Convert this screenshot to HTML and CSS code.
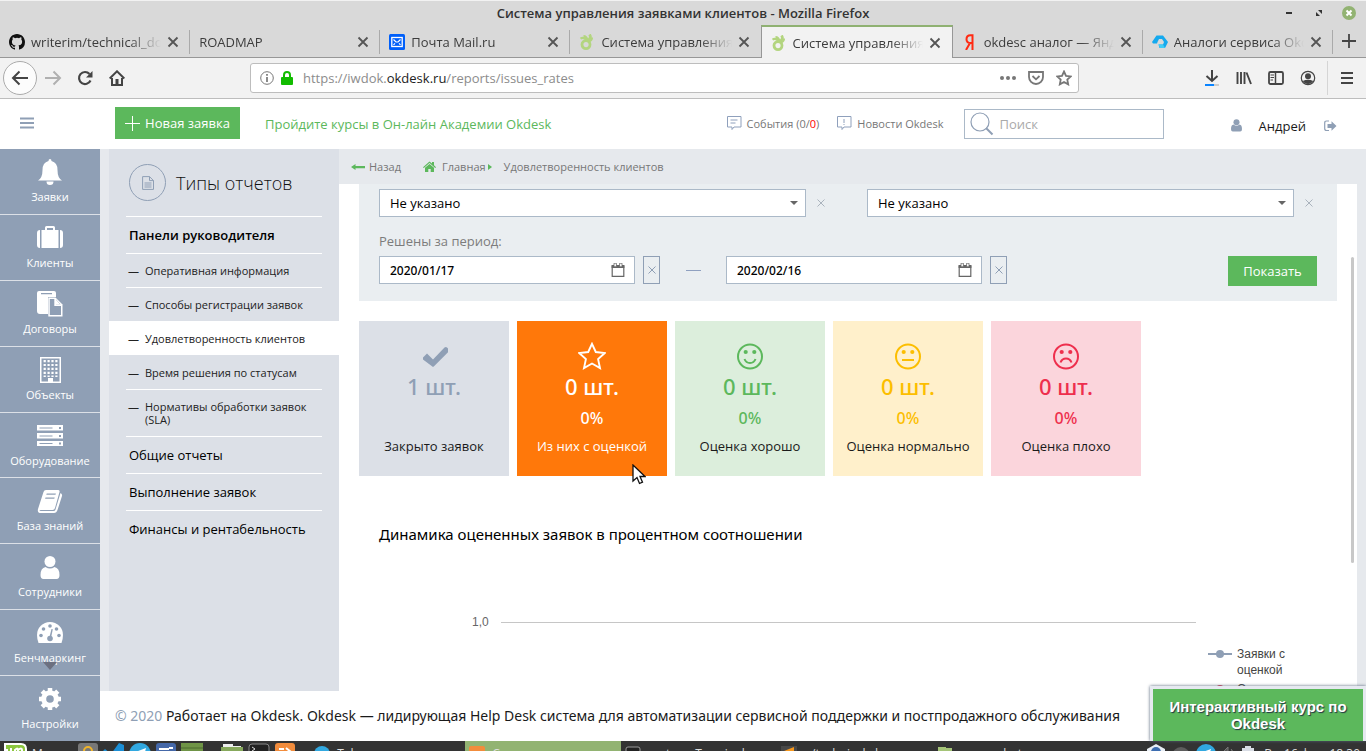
FILE: index.html
```
<!DOCTYPE html>
<html lang="ru">
<head>
<meta charset="utf-8">
<title>Система управления заявками клиентов</title>
<link rel="stylesheet" href="styles.css">
</head>
<body>
<svg class="sprite" aria-hidden="true">
  <symbol id="close" viewBox="0 0 12 12"><path d="M1.5 1.5l9 9M10.5 1.5l-9 9" fill="none" stroke="currentColor" stroke-width="1.8"/></symbol>
  <symbol id="thin-x" viewBox="0 0 8 8"><path d="M.5 .5l7 7M7.5 .5l-7 7" fill="none" stroke="currentColor" stroke-width="1"/></symbol>
  <symbol id="okdesk" viewBox="0 0 16 16"><g fill="none" stroke="#b3d57f"><circle cx="7" cy="10.6" r="4" stroke-width="2.8"/><path d="M1.500 4.600q3-2 6 1.500M4.500 2q3 0 4 4" stroke-width="2.200"/><path d="M10.500 .5q2.500 3.500-2 6" stroke-width="2.800"/><path d="M13 3.500q.3 2.500-3 4" stroke-width="2"/></g></symbol>
  <symbol id="calendar" viewBox="0 0 14 14"><path d="M1.200 3h11.600v10.300H1.200z" fill="none" stroke="currentColor" stroke-width="1.200"/><path d="M.6 2h12.800v3H.6z" fill="currentColor"/><path d="M3 .2h2.400v3.600H3zM8.600.2H11v3.600H8.600z" fill="#fff" stroke="currentColor" stroke-width=".8"/></symbol>
  <symbol id="user" viewBox="0 0 24 28"><circle cx="12" cy="7" r="6.600" fill="currentColor"/><path d="M5.500 12Q12 17.500 18.500 12Q24 13 24 22Q24 27 20 27H4Q0 27 0 22Q0 13 5.500 12z" fill="currentColor"/></symbol>
</svg>

<header class="titlebar">
  <h1 class="window-title">Система управления заявками клиентов - Mozilla Firefox</h1>
  <div class="window-buttons">
    <button class="win-btn" aria-label="Свернуть"><svg width="8" height="8"><path d="M1 4h6" stroke="#333" stroke-width="2"/></svg></button>
    <button class="win-btn" aria-label="Развернуть"><svg width="8" height="8"><path d="M3 1h4v4zM1 3v4h4z" fill="#333"/></svg></button>
    <button class="win-btn" aria-label="Закрыть"><svg width="14" height="14"><circle cx="7" cy="7" r="7" fill="#92b372"/><path d="M4.500 4.500l5 5M9.500 4.500l-5 5" stroke="#fff" stroke-width="2"/></svg></button>
  </div>
</header>

<nav class="tabs" aria-label="Вкладки">
  <div class="tab"><svg class="favicon" viewBox="0 0 16 16"><path fill="#111" d="M8 0C3.580 0 0 3.580 0 8c0 3.540 2.290 6.530 5.470 7.590.4.070.55-.17.55-.38 0-.19-.01-.82-.01-1.490-2.010.37-2.530-.49-2.690-.94-.09-.23-.48-.94-.82-1.130-.28-.15-.68-.52-.01-.53.63-.01 1.080.58 1.230.82.72 1.210 1.870.87 2.330.66.070-.52.28-.87.51-1.070-1.780-.2-3.640-.89-3.640-3.950 0-.87.31-1.590.82-2.150-.08-.2-.36-1.020.08-2.120 0 0 .67-.21 2.200.82a7.600 7.600 0 0 1 4 0c1.530-1.040 2.200-.82 2.200-.82.44 1.100.16 1.920.08 2.120.51.56.82 1.270.82 2.150 0 3.070-1.870 3.750-3.650 3.950.29.25.54.73.54 1.480 0 1.070-.01 1.930-.01 2.200 0 .21.15.46.55.38A8 8 0 0 0 16 8c0-4.420-3.580-8-8-8z"/></svg><a class="tab-label" href="#">writerim/technical_docs</a><button class="tab-close" aria-label="Закрыть вкладку"><svg><use href="#close"/></svg></button></div>
  <div class="tab"><a class="tab-label" href="#">ROADMAP</a><button class="tab-close" aria-label="Закрыть вкладку"><svg><use href="#close"/></svg></button></div>
  <div class="tab"><svg class="favicon" viewBox="0 0 16 16"><rect width="16" height="16" rx="1.500" fill="#005ff9"/><rect x="2.800" y="3.500" width="10.400" height="9" fill="none" stroke="#fff" stroke-width="1.300"/><path d="M4.500 5.500l2.500 2.500h2l2.500-2.500M4.500 10.800l1.500-1.500M11.500 10.800L10 9.300" fill="none" stroke="#fff" stroke-width="1.200"/></svg><a class="tab-label" href="#">Почта Mail.ru</a><button class="tab-close" aria-label="Закрыть вкладку"><svg><use href="#close"/></svg></button></div>
  <div class="tab before-active"><svg class="favicon"><use href="#okdesk"/></svg><a class="tab-label" href="#">Система управления заявками</a><button class="tab-close" aria-label="Закрыть вкладку"><svg><use href="#close"/></svg></button></div>
  <div class="tab active"><svg class="favicon"><use href="#okdesk"/></svg><a class="tab-label" href="#">Система управления заявками</a><button class="tab-close" aria-label="Закрыть вкладку"><svg><use href="#close"/></svg></button></div>
  <div class="tab"><svg class="favicon" viewBox="0 0 16 16"><path d="M10.500 .2V16M11 1.200H8.500Q4.500 1.200 4.500 5.200Q4.500 9 8.500 9H11M8 9L4 16" fill="none" stroke="#ff2a12" stroke-width="2"/></svg><a class="tab-label" href="#">okdesc аналог — Яндекс</a><button class="tab-close" aria-label="Закрыть вкладку"><svg><use href="#close"/></svg></button></div>
  <div class="tab"><svg class="favicon" viewBox="0 0 16 16"><path d="M4.500 1.500H11L16 8l-3 6H7.500l-1-3.500H11L12 8 10 5H7L5.500 8 5 9.500H1L0 8z" fill="#15a9ee"/><path d="M6.500 10.500H11l2 3.500H8z" fill="#42cdf6"/></svg><a class="tab-label" href="#">Аналоги сервиса Okdesk</a><button class="tab-close" aria-label="Закрыть вкладку"><svg><use href="#close"/></svg></button></div>
  <button class="new-tab" aria-label="Новая вкладка"><svg width="14" height="14"><path d="M7 0v14M0 7h14" stroke="#444" stroke-width="1.800"/></svg></button>
</nav>

<div class="toolbar">
  <button class="tool back" aria-label="Назад"><svg width="18" height="16"><path d="M17 8H2M8.500 1.500L2 8l6.500 6.500" fill="none" stroke="#444" stroke-width="2"/></svg></button>
  <button class="tool" aria-label="Вперёд"><svg width="18" height="16"><path d="M1 8h15M9.500 1.500L16 8l-6.500 6.500" fill="none" stroke="#b0b0b0" stroke-width="2"/></svg></button>
  <button class="tool" aria-label="Обновить"><svg width="16" height="16"><path d="M13.500 10.500A6 6 0 1 1 12.500 4" fill="none" stroke="#444" stroke-width="2.200"/><path d="M15.500 1v6.500H9z" fill="#444"/></svg></button>
  <button class="tool" aria-label="Домой"><svg width="16" height="16"><path d="M.7 8.500L8 1.300l7.300 7.200M3 8v7h10V8" fill="none" stroke="#444" stroke-width="2"/><path d="M6.500 9h3v6h-3z" fill="#444"/></svg></button>
  <div class="urlbar">
    <svg width="14" height="14"><circle cx="7" cy="7" r="6.300" fill="none" stroke="#777"/><path d="M7 6v5M7 3v1.800" stroke="#777" stroke-width="1.700"/></svg>
    <svg width="12" height="14"><path d="M3 7V4a3 3 0 0 1 6 0v3" fill="none" stroke="#12bc00" stroke-width="2"/><rect y="6" width="12" height="8" rx="1" fill="#12bc00"/></svg>
    <div class="url" role="textbox" contenteditable="true" aria-label="Адрес">https://iwdok.<span class="domain">okdesk.ru</span>/reports/issues_rates</div>
    <button class="url-btn" aria-label="Действия"><svg width="16" height="16" fill="#777"><circle cx="2" cy="8" r="2"/><circle cx="8" cy="8" r="2"/><circle cx="14" cy="8" r="2"/></svg></button>
    <button class="url-btn" aria-label="Pocket"><svg width="16" height="16" fill="none" stroke="#777" stroke-width="1.800"><path d="M1 2h14v5a7 7 0 0 1-14 0z"/><path d="M4.500 6L8 9.300 11.500 6"/></svg></button>
    <button class="url-btn" aria-label="В закладки"><svg width="16" height="16"><path d="M8 1.500l2 4.300 4.800.6-3.500 3.200.9 4.800L8 12l-4.200 2.400.9-4.800L1.200 6.400 6 5.800z" fill="none" stroke="#777" stroke-width="1.800"/></svg></button>
  </div>
  <button class="tool" aria-label="Загрузки"><svg width="16" height="18"><path d="M8 1v11M2.500 7L8 12l5.500-5" fill="none" stroke="#444" stroke-width="2"/><path d="M1 15h14v2H1z" fill="#ccc"/><path d="M1 15h9v2H1z" fill="#0a84ff"/></svg></button>
  <button class="tool" aria-label="Библиотека"><svg width="16" height="16"><path d="M1.500 2v12M5 2v12M8.500 2v12M10.500 2.500L15 14" stroke="#444" stroke-width="1.900"/></svg></button>
  <button class="tool" aria-label="Боковая панель"><svg width="16" height="16"><rect x="1" y="2" width="14" height="12" rx="1.500" fill="none" stroke="#444" stroke-width="1.800"/><path d="M7.500 2v12" stroke="#444" stroke-width="1.500"/><path d="M2.500 5h3.500M2.500 7.500h3.500M2.500 10H5" stroke="#444"/></svg></button>
  <button class="tool" aria-label="Аккаунт"><svg width="16" height="16"><circle cx="8" cy="8" r="6.700" fill="none" stroke="#444" stroke-width="1.200"/><circle cx="8" cy="6.300" r="3" fill="#444"/><path d="M2.800 11Q8 8.500 13.200 11A6 6 0 0 1 2.800 11z" fill="#444"/></svg></button>
  <span class="tool-sep"></span>
  <button class="tool" aria-label="Меню"><svg width="12" height="12"><path d="M0 1h12M0 6h12M0 11h12" stroke="#444" stroke-width="1.900"/></svg></button>
</div>

<div class="app">
  <header class="app-header">
    <button class="menu-toggle" aria-label="Меню"><svg width="14" height="12"><path d="M0 1.500h14M0 6h14M0 10.500h14" stroke="#8f9fb5" stroke-width="2.200"/></svg></button>
    <button class="btn new-issue"><svg width="15" height="15"><path d="M7.500 0v15M0 7.500h15" stroke="#fff"/></svg>Новая заявка</button>
    <a class="courses" href="#">Пройдите курсы в Он-лайн Академии Okdesk</a>
    <a class="head-link" href="#"><svg width="15" height="15" fill="none" stroke="#8fa0bc"><path d="M.5 .5h13.500v10.500H7L5 13.500V11H.5zM3.500 4h7M3.500 7h5"/></svg><span>События (0/<b class="hot">0</b>)</span></a>
    <a class="head-link" href="#"><svg width="15" height="15" fill="none" stroke="#8fa0bc"><path d="M.5 .5h13.500v10.500H7L5 13.500V11H.5zM7 3v4M7 8v1"/></svg><span>Новости Okdesk</span></a>
    <label class="search"><svg width="24" height="24" fill="none" stroke="#8f9fb5"><circle cx="10" cy="10" r="9" stroke-width="1.200"/><path d="M16 16l6.500 6.500" stroke-width="2"/></svg><input class="search-input" type="text" placeholder="Поиск" aria-label="Поиск"></label>
    <a class="account" href="#"><svg class="account-icon"><use href="#user"/></svg><span>Андрей</span></a>
    <button class="logout" aria-label="Выйти"><svg width="13" height="12"><path d="M5 1H2.500Q.7 1 .7 3v5.500Q.7 10.500 2.500 10.500H5" fill="none" stroke="#8f9fb5" stroke-width="1.200"/><path d="M3.500 4h4V1.300L12.500 6l-5 4.700V8h-4z" fill="#8f9fb5"/></svg></button>
  </header>

  <nav class="rail" aria-label="Разделы">
    <a class="rail-item" href="#"><svg viewBox="0 0 26 26"><path d="M13 0q1.500 0 1.500 2Q20.500 3.500 20.500 11q0 8 4.500 10.500H1Q5.500 19 5.500 11 5.500 3.500 11.500 2q0-2 1.500-2zM9.500 22.500h7a3.500 3.500 0 0 1-7 0z"/></svg>Заявки</a>
    <a class="rail-item" href="#"><svg viewBox="0 0 26 26"><path d="M0 8q0-3 3-3v18q-3 0-3-3zM26 8q0-3-3-3v18q3 0 3-3zM4.500 5H8V2.500Q8 1 9.500 1h7Q18 1 18 2.500V5h3.500v18h-17zM10 3v2h6V3z"/></svg>Клиенты</a>
    <a class="rail-item" href="#"><svg viewBox="0 0 26 26"><path d="M0 2Q0 0 2 0h15q2 0 2 2v4h-8v17H3q-3 0-3-3zM4 2v1.200h11V2z" fill-rule="evenodd"/><path d="M11.300 6.500h7.200l7 7v12H11.300z"/><path d="M12.800 8h4.500v7H24v9H12.800zM19 8.500l4.500 4.700H19z" fill="#8f9fb5"/><path d="M19 8.800l4.200 4.400H19z"/></svg>Договоры</a>
    <a class="rail-item" href="#"><svg viewBox="0 0 26 26"><path fill-rule="evenodd" d="M3 0h21v26H3zm1.500 1.500v23H11V21h5v3.500h6.500v-23z"/><path d="M7.700 3v17M11.600 3v17M15.500 3v17M19.400 3v17" stroke="#fff" stroke-width="2.200" stroke-dasharray="2.200 1.700"/></svg>Объекты</a>
    <a class="rail-item" href="#"><svg viewBox="0 0 26 26"><path fill-rule="evenodd" d="M0 2h26v5.500H0zM2.500 4.500v1h13v-1zM22 4v2h2V4zM0 10h26v5.500H0zM2.500 12.500v1h13v-1zM22 12v2h2v-2zM0 18h26v5H0zM2.500 20v1h13v-1zM22 19.500v2h2v-2z"/></svg>Оборудование</a>
    <a class="rail-item" href="#"><svg viewBox="0 0 26 26"><path fill-rule="evenodd" d="M9 2h12q2 0 1.500 2L18 20q-.5 2-2.500 2H4q-1.500 0-1.500 1h14q1.500 0 2-1.500L23.500 5q2 1 1.500 3l-4.500 14q-1 3-3.500 3H4Q0 25 1 21L6.500 4Q7 2 9 2zm.7 3.500l-.4 1.200h9.200l.4-1.200zM8.500 9.500l-.4 1.200h9.200l.4-1.200z"/></svg>База знаний</a>
    <a class="rail-item" href="#"><svg viewBox="0 0 26 26"><circle cx="13" cy="7.500" r="5.500"/><path d="M8.500 13q4.500 3 9 0 5 1 5 8 0 4-3 4h-13q-3 0-3-4 0-7 5-8z"/></svg>Сотрудники</a>
    <a class="rail-item" href="#"><svg viewBox="0 0 26 26"><path d="M13 2a13 13 0 0 1 13 13q0 3.500-1.500 8h-23Q0 18.500 0 15A13 13 0 0 1 13 2z"/><g fill="#8f9fb5"><circle cx="4" cy="15.500" r="1.800"/><circle cx="6.500" cy="9" r="1.800"/><circle cx="13" cy="6" r="1.800"/><circle cx="19.500" cy="9" r="1.800"/><circle cx="22" cy="15.500" r="1.800"/><circle cx="13" cy="18.500" r="2.800"/><path d="M12.500 17L14.500 9l1.300.3L14 18z"/></g></svg><span class="rail-more">Бенчмаркинг</span></a>
    <a class="rail-item" href="#"><svg viewBox="0 0 26 26"><circle cx="13" cy="13" r="6.300" fill="none" stroke="#fff" stroke-width="5"/><g stroke="#fff" stroke-width="4.500"><path d="M13 2v5M13 19v5M2 13h5M19 13h5M5.200 5.200l3.500 3.500M17.300 17.300l3.500 3.500M5.200 20.800l3.500-3.500M17.300 8.700l3.500-3.500"/></g></svg>Настройки</a>
  </nav>

  <aside class="side">
    <div class="side-head"><span class="side-icon"><svg width="12" height="14" fill="none" stroke="#8f9fb5"><path d="M.6.6h6.900l4 4v8.800H.6zM7.500.6v4h4M2.500 7h7M2.500 9h7M2.500 11h7"/></svg></span><h2 class="side-title">Типы отчетов</h2></div>
    <ul class="side-list">
      <li class="group bold"><a href="#">Панели руководителя</a></li>
      <li class="leaf"><span class="dash">—</span><a href="#">Оперативная информация</a></li>
      <li class="leaf"><span class="dash">—</span><a href="#">Способы регистрации заявок</a></li>
      <li class="leaf current"><span class="dash">—</span><a href="#">Удовлетворенность клиентов</a></li>
      <li class="leaf"><span class="dash">—</span><a href="#">Время решения по статусам</a></li>
      <li class="leaf"><span class="dash">—</span><a href="#">Нормативы обработки заявок (SLA)</a></li>
      <li class="group"><a href="#">Общие отчеты</a></li>
      <li class="group"><a href="#">Выполнение заявок</a></li>
      <li class="group"><a href="#">Финансы и рентабельность</a></li>
    </ul>
  </aside>

  <main class="main">
    <nav class="crumbs" aria-label="Навигация">
      <a class="crumb" href="#"><svg width="14" height="8"><path d="M0 4l4.500-3v2H14v2.200H4.500V7z" fill="#5cb85c"/></svg>Назад</a>
      <a class="crumb home" href="#"><svg width="13" height="12" fill="#5cb85c"><path d="M6.500.5L9 2.600V1h2v3.300l2 1.900-.8.800L6.500 2 .8 7 0 6.200z"/><path d="M2 6.800L6.500 3 11 6.800V11H7.700V8H5.300v3H2z"/></svg>Главная<svg class="chev" width="4" height="6"><path d="M0 0l4 3-4 3z" fill="#5cb85c"/></svg></a>
      <span>Удовлетворенность клиентов</span>
    </nav>
    <div class="panel">
      <form class="filter">
        <div class="filter-row">
          <div class="field"><select class="box select" aria-label="Фильтр 1"><option>Не указано</option></select><button type="button" class="clear" aria-label="Очистить"><svg><use href="#thin-x"/></svg></button></div>
          <div class="field"><select class="box select" aria-label="Фильтр 2"><option>Не указано</option></select><button type="button" class="clear" aria-label="Очистить"><svg><use href="#thin-x"/></svg></button></div>
        </div>
        <label class="period-label" for="from">Решены за период:</label>
        <div class="period">
          <span class="box date"><input id="from" class="date-input" type="text" value="2020/01/17"><svg><use href="#calendar"/></svg></span>
          <button type="button" class="clear framed" aria-label="Очистить"><svg><use href="#thin-x"/></svg></button>
          <span class="range-dash"></span>
          <span class="box date"><input class="date-input" type="text" value="2020/02/16" aria-label="по"><svg><use href="#calendar"/></svg></span>
          <button type="button" class="clear framed" aria-label="Очистить"><svg><use href="#thin-x"/></svg></button>
          <button type="button" class="btn show">Показать</button>
        </div>
      </form>

      <div class="cards">
        <section class="card closed"><svg viewBox="-2 -1 28 28"><path d="M1 14.500l4-4 6 6L22.500 4.500q1.500-1 2.500 0l2 2q.5 1-.3 2L12 23.300q-1 1-2 0L1 16.500z" fill="currentColor"/></svg><p class="count">1 шт.</p><p class="share"></p><p class="name">Закрыто заявок</p></section>
        <section class="card rated"><svg viewBox="0 0 28 28"><path d="M14 1.800l3.800 8.200 9 1-6.700 6.100 1.900 9-8-4.600-8 4.600 1.900-9L1.200 11l9-1z" fill="none" stroke="currentColor" stroke-width="1.900"/></svg><p class="count">0 шт.</p><p class="share">0%</p><p class="name">Из них с оценкой</p></section>
        <section class="card good"><svg viewBox="0 0 28 28" fill="none" stroke="currentColor" stroke-width="2"><circle cx="14" cy="14.500" r="12"/><circle cx="9.700" cy="10" r="1.100"/><circle cx="18.300" cy="10" r="1.100"/><path d="M8.500 17Q10 21 14 21t5.500-4"/></svg><p class="count">0 шт.</p><p class="share">0%</p><p class="name">Оценка хорошо</p></section>
        <section class="card normal"><svg viewBox="0 0 28 28" fill="none" stroke="currentColor" stroke-width="2"><circle cx="14" cy="14.500" r="12"/><circle cx="9.700" cy="10" r="1.100"/><circle cx="18.300" cy="10" r="1.100"/><path d="M8 18h12"/></svg><p class="count">0 шт.</p><p class="share">0%</p><p class="name">Оценка нормально</p></section>
        <section class="card bad"><svg viewBox="0 0 28 28" fill="none" stroke="currentColor" stroke-width="2"><circle cx="14" cy="14.500" r="12"/><circle cx="9.700" cy="10" r="1.100"/><circle cx="18.300" cy="10" r="1.100"/><path d="M8.500 20.500Q10 16.500 14 16.500t5.500 4"/></svg><p class="count">0 шт.</p><p class="share">0%</p><p class="name">Оценка плохо</p></section>
      </div>

      <h2 class="chart-title">Динамика оцененных заявок в процентном соотношении</h2>
      <div class="chart">
        <span class="tick">1,0</span>
        <span class="gridline"></span>
        <ul class="legend">
          <li><svg class="rated-mark" width="24" height="8"><path d="M0 4h24" stroke="currentColor" stroke-width="2"/><circle cx="12" cy="4" r="4" fill="currentColor"/></svg><span>Заявки с оценкой</span></li>
          <li><svg class="bad-mark" width="24" height="8"><path d="M0 4h24" stroke="currentColor" stroke-width="2"/><circle cx="12" cy="4" r="4" fill="currentColor"/></svg><span>Оценка плохо</span></li>
        </ul>
      </div>
      <span class="scroll-thumb"></span>
    </div>
  </main>

  <footer class="footer"><span class="copy">© 2020</span> Работает на Okdesk. Okdesk — лидирующая Help Desk система для автоматизации сервисной поддержки и постпродажного обслуживания</footer>
  <button class="course-widget">Интерактивный курс по Okdesk</button>
  <svg class="pointer" width="14" height="21"><path d="M1 1v16l4-3.500 2.500 6 3-1.300L8 12.500h5z" fill="#fff" stroke="#111" stroke-width="1.300"/></svg>
</div>

<footer class="taskbar">
  <button class="task start"><svg width="24" height="24"><path d="M1 1h16q5 0 5 5v16H7Q3 20 3 15V7H1z" fill="#8cc63f" stroke="#fff" stroke-width="2"/><path d="M7 5v9M11 14V7q3-3 3 0v7M14 7q4-3 4 0v7" fill="none" stroke="#fff" stroke-width="2"/></svg><span>Menu</span></button>
  <button class="task lock" aria-label="Замок"><svg width="20" height="22"><rect width="20" height="22" rx="3" fill="#777"/><path d="M6 12V8a4 4 0 0 1 8 0v4" fill="none" stroke="#f0b429" stroke-width="2"/></svg></button>
  <button class="task" aria-label="Редактор кода"><svg width="21" height="22"><path d="M16 0l5 2v18L0 8l2-2 6 5z" fill="#1b8fd6"/></svg></button>
  <button class="task" aria-label="Telegram"><svg width="22" height="22"><circle cx="11" cy="11" r="11" fill="#31a8e0"/><path d="M4 10l13-5-3 12z" fill="#fff"/></svg></button>
  <button class="task" aria-label="Текст"><svg width="20" height="22"><rect width="20" height="22" rx="3" fill="#4568a8"/><path d="M3 6h10M3 9h14M13 5h4" stroke="#fff" stroke-width="2"/></svg></button>
  <button class="task" aria-label="Рабочий стол"><svg width="22" height="22"><path d="M0 0h22v22H0z" fill="#6f9446"/><path d="M0 5h22" stroke="#4d6b2f"/></svg></button>
  <button class="task files" aria-label="Файлы"><svg width="22" height="22"><path d="M2 4V1h10v2h8v6H2z" fill="#eee"/><path d="M0 4h22v18H0z" fill="#87a95c"/></svg></button>
  <button class="task" aria-label="Терминал"><svg width="22" height="22"><rect x="1" y="1" width="20" height="20" rx="3" fill="#222" stroke="#888"/><path d="M4 4l3 2-3 2" fill="none" stroke="#ddd"/></svg></button>
  <button class="task" aria-label="Приложение"><svg width="20" height="22"><rect width="20" height="22" rx="3" fill="#f28c3c"/><path d="M4 6h5M11 5l5 4" stroke="#fff" stroke-width="2"/></svg></button>
  <button class="task win telegram"><svg width="16" height="20"><circle cx="8" cy="11" r="8" fill="#31a8e0"/></svg><span>Telegram</span></button>
  <button class="task win on"><svg width="16" height="20"><rect y="3" width="16" height="16" rx="2" fill="#f28c3c"/></svg><span>Система управ…</span></button>
  <button class="task win"><svg width="16" height="20"><rect x="1" y="4" width="14" height="15" rx="2" fill="#222" stroke="#999"/></svg><span>mate — Terminal</span></button>
  <button class="task win"><svg width="16" height="20"><rect y="3" width="16" height="16" fill="#484848"/><path d="M3 8l10-4v5z" fill="#f8981d"/></svg><span>~/technical_docs…</span></button>
  <button class="task win"><svg width="16" height="20"><path d="M1 5V4h8v1h6v14H1z" fill="#a5c478"/></svg><span>screenshots</span></button>
  <span class="tray">
    <svg width="20" height="22"><path d="M10 1l9 5v12H1V6z" fill="#e8eef5"/><circle cx="10" cy="9" r="5" fill="#3d6db0"/></svg>
    <svg width="18" height="22"><circle cx="9" cy="13" r="9" fill="#5d5d5d"/></svg>
    <svg width="20" height="22"><circle cx="10" cy="11" r="10" fill="#31a8e0"/><path d="M4 10l11-4-3 9z" fill="#fff"/></svg>
    <svg width="14" height="22"><path d="M0 10l6-6v12zM9 6q4 4 0 8" fill="#555" stroke="#777"/></svg>
    <svg width="12" height="22"><path d="M3 3h6v2h3v17H0V5h3z" fill="#d8dce4"/></svg>
    <span class="clock">Вс. 16 фев, 18:30</span>
  </span>
</footer>
</body>
</html>
```
FILE: styles.css
```
* { box-sizing: border-box; }
body {
  margin: 0;
  height: 100vh;
  display: flex;
  flex-direction: column;
  overflow: hidden;
  font-family: "Open Sans", "Noto Sans", sans-serif;
  font-size: 13px;
  color: #1a1a1a;
  background: #fff;
}
button, input, select { font: inherit; color: inherit; }
button { border: 0; padding: 0; background: none; display: flex; align-items: center; justify-content: center; }
a { color: inherit; text-decoration: none; }
h1, h2, p, ul { margin: 0; padding: 0; font-weight: 400; }
ul { list-style: none; }
svg { display: block; flex: none; }
.sprite { position: absolute; width: 0; height: 0; }

/* browser window */
.titlebar { display: grid; grid-template-columns: 1fr auto 1fr; align-items: center; height: 25px; flex: none; background: #d9d9d9; border-top: 1px solid #f2f2f2; }
.window-title { grid-column: 2; font-size: 13px; font-weight: 600; color: #333; }
.window-buttons { display: flex; justify-content: flex-end; gap: 16px; padding-right: 10px; }
.win-btn { width: 14px; height: 14px; }

.tabs { display: flex; height: 33px; flex: none; background: #d9d9d9; }
.tab { flex: 1 1 0; min-width: 0; display: flex; align-items: center; gap: 6px; padding: 1px 11px 0 9px; border-bottom: 1px solid #979797; background: linear-gradient(#aaa, #aaa) right 5px / 1px 24px no-repeat; }
.before-active { background: none; }
.tab.active { background: #f2f2f2; border: 1px solid #979797; border-top: 2px solid #8fb172; border-bottom: 0; padding-top: 0; }
.favicon { width: 16px; height: 16px; }
.tab-label { flex: 1; min-width: 0; font-size: 13px; line-height: 20px; color: #3c3c3c; white-space: nowrap; overflow: hidden; mask-image: linear-gradient(to left, transparent, #000 32px); }
.tab-close svg { width: 12px; height: 12px; color: #555; }
.new-tab { width: 33px; border-bottom: 1px solid #979797; }

.toolbar { display: flex; align-items: center; height: 41px; flex: none; background: #f2f2f2; border-bottom: 1px solid #bdbdbd; padding: 0 3px; }
.tool { width: 32px; height: 34px; flex: none; }
.back { width: 34px; border: 1px solid #ababab; border-radius: 50%; background: #fcfcfc; }
.urlbar { flex: 1; height: 30px; margin: 0 117px; padding: 0 4px 0 9px; display: flex; align-items: center; gap: 7px; background: #fff; border: 1px solid #bdbdbd; border-radius: 3px; }
.url { flex: 1; min-width: 0; padding-left: 3px; font-size: 13px; line-height: 20px; color: #8c8c8c; white-space: nowrap; }
.domain { color: #222; }
.url-btn { width: 21px; height: 24px; }
.tool-sep { width: 1px; height: 34px; margin: 0 3px; background: #d5d5d5; }

/* application */
.app { position: relative; flex: 1; min-height: 0; display: grid; grid-template: 50px minmax(0, 1fr) 50px / 100px 239px minmax(0, 1fr); background: #fff; }
.app-header { grid-column: 1 / -1; display: flex; align-items: center; padding: 0 29px 2px 0; }
.menu-toggle { width: 54px; height: 32px; margin-right: 61px; }
.btn { background: #5cb85c; color: #fff; }
.new-issue { height: 32px; width: 125px; gap: 5px; }
.courses { margin: 2px auto 0 25px; color: #5cb85c; }
.head-link { display: flex; align-items: center; gap: 5px; margin-right: 18px; font-size: 11px; color: #777; }
.hot { font-weight: 400; color: #f00; }
.search { display: flex; align-items: center; width: 200px; height: 30px; margin: 2px 67px 0 2px; padding-left: 5px; gap: 6px; border: 1px solid #abb9c8; }
.search-input { width: 100%; min-width: 0; border: 0; padding: 0; outline: 0; background: none; }
.search-input::placeholder { color: #aaa; opacity: 1; }
.account { display: flex; align-items: center; gap: 17px; margin-top: 5px; }
.account-icon { width: 11px; height: 13px; color: #8f9fb5; }
.logout { margin: 5px 0 0 18px; }

.rail { grid-row: 2 / 4; display: flex; flex-direction: column; background: #8f9fb5; }
.rail-item { flex: 1; min-height: 0; display: flex; flex-direction: column; align-items: center; padding-top: 10px; gap: 4px; border-bottom: 1px solid #dce0e7; font-size: 11px; line-height: 15px; color: #fff; }
.rail-item:last-child { border-bottom: 0; }
.rail-item svg { width: 26px; height: 26px; fill: #fff; }
.rail-more { position: relative; }
.rail-more::after { content: ""; position: absolute; top: 12px; left: calc(50% - 7px); border: 7px solid transparent; border-top: 8px solid #6c7080; border-bottom: 0; }

.side { border-left: 9px solid #e6e9ed; background: #dce0e7; overflow: hidden; }
.side-head { display: flex; align-items: center; gap: 10px; height: 67px; padding-left: 20px; }
.side-icon { width: 37px; height: 37px; display: grid; place-items: center; border: 1px solid #8f9fb5; border-radius: 50%; }
.side-title { font-size: 18px; font-weight: 300; color: #111; }
.side-list li { display: flex; margin: 0 17px; border-top: 1px solid #fff; }
.group { padding: 9px 3px; line-height: 18px; color: #000; }
.bold { font-weight: 600; }
.side-list .leaf { padding: 10px 0 10px 2px; gap: 6px; font-size: 11px; line-height: 13px; color: #222; }
.side-list .current { margin: 0; padding-left: 19px; background: #fff; }
.side-list .current + li { border-top-color: transparent; }

.main { display: flex; flex-direction: column; min-width: 0; min-height: 0; background: #e6e9ed; }
.crumbs { display: flex; align-items: center; height: 35px; flex: none; padding-left: 12px; font-size: 11px; color: #777; }
.crumb { display: flex; align-items: center; gap: 4px; }
.home { margin: 0 12px 0 22px; gap: 6px; }
.chev { margin-left: -4px; }
.panel { position: relative; flex: 1; min-height: 0; margin-right: 9px; padding: 0 20px; background: #fff; overflow: hidden; }
.filter { padding: 5px 20px 15px; background: #eaeef1; }
.filter-row { display: grid; grid-template-columns: 1fr 1fr; gap: 38px; }
.field { position: relative; display: flex; }
.field::after { content: ""; position: absolute; right: 31px; top: 12px; border: 4px solid transparent; border-top-color: #666; border-bottom: 0; pointer-events: none; }
.box { height: 28px; border: 1px solid #abb9c8; border-radius: 0; background: #fff; color: #000; }
.select { flex: 1; min-width: 0; padding: 0 10px; appearance: none; }
.clear { width: 23px; height: 28px; padding-left: 6px; color: #aab3bd; }
.clear svg { width: 8px; height: 8px; }
.period-label { display: block; margin: 14px 0 5px; line-height: 20px; color: #7c7c7c; }
.period { display: flex; align-items: flex-start; height: 30px; }
.date { display: flex; align-items: center; width: 256px; padding: 0 9px 0 10px; }
.date svg { width: 14px; height: 14px; color: #666; }
.date-input { flex: 1; min-width: 0; border: 0; padding: 0; outline: 0; background: none; font-family: "Noto Sans", sans-serif; font-size: 12px; font-weight: 500; }
.framed { width: 17px; margin-left: 8px; padding: 0; border: 1px solid #8f9fb5; color: #8f9fb5; }
.range-dash { width: 15px; height: 1px; margin: 14px 25px 0 26px; background: #8fa0c0; }
.show { width: 89px; height: 30px; margin-left: auto; }

.cards { display: flex; gap: 8px; margin-top: 20px; }
.card { width: 150px; height: 155px; display: flex; flex-direction: column; align-items: center; padding-top: 21px; }
.card svg { width: 28px; height: 28px; }
.count, .share { font-family: "Noto Sans", "Open Sans", sans-serif; font-weight: 500; }
.count { font-size: 22px; line-height: 32px; }
.share { height: 32px; font-size: 16px; line-height: 32px; }
.name { margin-top: 2px; line-height: 20px; color: #1a1a1a; }
.closed { background: #dce0e7; color: #8f9fb5; }
.rated { background: #ff780a; color: #fff; }
.rated .name { color: #fff; }
.good { background: #dceedc; color: #5cb85c; }
.normal { background: #fff0cb; color: #fcbe00; }
.bad { background: #fbd5dc; color: #ee2f4d; }

.chart-title { margin: 47px 20px 0; font-family: "Noto Sans", sans-serif; font-size: 15px; line-height: 22px; color: #000; }
.chart { display: flex; margin: 69px 0 0 113px; font: 12px/16px "Liberation Sans", sans-serif; color: #444; }
.tick { width: 29px; color: #666; }
.gridline { flex: 1; height: 1px; margin-top: 8px; background: #c6c6c6; }
.legend { width: 129px; margin-left: 12px; padding-top: 32px; }
.legend li { display: flex; gap: 5px; width: 100px; padding-bottom: 3px; }
.legend svg { margin-top: 4px; }
.rated-mark { color: #8f9fb5; }
.bad-mark { color: #e0475f; }
.scroll-thumb { position: absolute; right: 3px; top: 73px; width: 3px; height: 306px; border-radius: 2px; background: #c8c8c8; }

.footer { grid-column: 2 / 4; padding: 14px 0 0 15px; font-family: "Noto Sans", sans-serif; font-size: 14px; line-height: 22px; white-space: nowrap; }
.copy { color: #8f9fb5; }
.course-widget { position: absolute; right: 0; bottom: 0; width: 216px; height: 55px; padding: 0 12px; border: 3px solid #e6e9f0; border-bottom: 0; background: #5cb85c; box-shadow: 0 0 3px #56657a; font: 700 15px/17px "Liberation Sans", sans-serif; color: #fff; text-shadow: 1px 1px 1px #234; }
.pointer { position: absolute; left: 632px; top: 365px; }

/* desktop panel */
.taskbar { display: flex; align-items: flex-start; height: 10px; flex: none; overflow: hidden; padding: 2px 0 0 4px; background: #333; font-size: 12px; line-height: 16px; color: #ddd; }
.task { align-items: flex-start; margin-right: 5px; }
.task span { padding-top: 3px; }
.start { gap: 4px; margin-right: 14px; }
.files { margin-left: 13px; }
.win { width: 156px; margin: -2px 0 0; padding: 2px 0 0 4px; gap: 7px; justify-content: flex-start; white-space: nowrap; }
.telegram { margin-left: 10px; width: 155px; }
.on { background: #92b372; }
.tray { display: flex; gap: 6px; margin-left: auto; padding-right: 6px; }
.clock { padding: 3px 0 0 4px; white-space: nowrap; }
```
